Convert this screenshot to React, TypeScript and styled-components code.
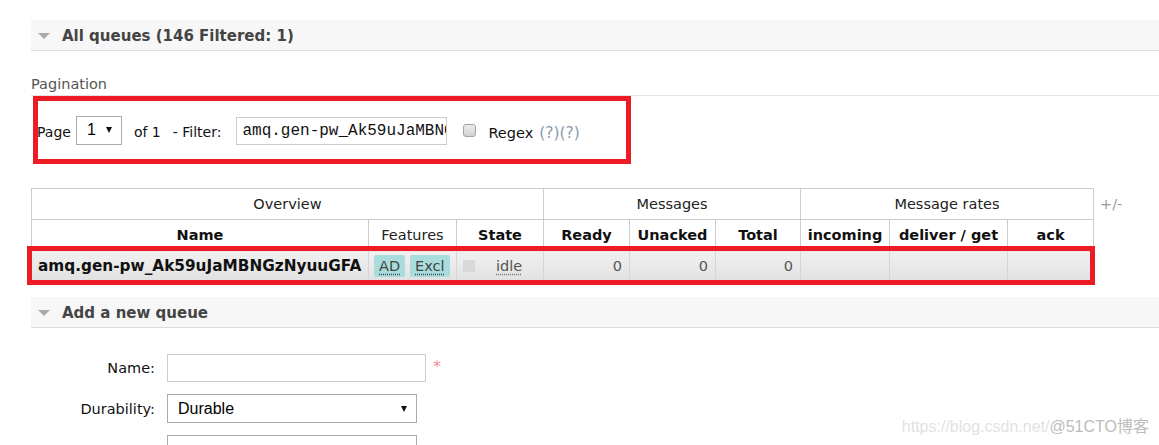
import React from 'react';
import styled, { createGlobalStyle } from 'styled-components';

const GlobalStyle = createGlobalStyle`
  html, body {
    margin: 0;
    padding: 0;
    background: #fff;
  }
  body {
    font-family: "DejaVu Sans", Verdana, sans-serif;
    color: #222;
  }
`;

const Page = styled.div`
  position: relative;
  width: 1159px;
  height: 445px;
  overflow: hidden;
  box-sizing: border-box;
  padding: 20px 0 0 31px;
`;

const SectionHeader = styled.div`
  display: flex;
  align-items: center;
  height: 28px;
  padding-top: 2px;
  background: #f7f7f7;
  border-bottom: 1px solid #ddd;
  font-size: 15px;
  font-weight: bold;
  color: #444;
`;

const Toggle = styled.span`
  width: 0;
  height: 0;
  margin: 0 12px 0 7px;
  border-left: 6.5px solid transparent;
  border-right: 6.5px solid transparent;
  border-top: 6px solid #aaa;
`;

const SubTitle = styled.div`
  margin-top: 23px;
  line-height: 20px;
  padding-bottom: 1px;
  border-bottom: 1px solid #e4e4e4;
  font-size: 14.5px;
  color: #555;
`;

// red annotation frames drawn over the screenshot
const Marked = styled.div`
  position: relative;
`;

const Frame = styled.span<{ $top: number; $left: number; $width: number; $height: number }>`
  position: absolute;
  top: ${(p) => p.$top}px;
  left: ${(p) => p.$left}px;
  width: ${(p) => p.$width}px;
  height: ${(p) => p.$height}px;
  box-sizing: border-box;
  border: 5px solid #ed1c24;
  pointer-events: none;
`;

const PaginationRow = styled.div`
  display: flex;
  align-items: center;
  height: 68px;
  padding-left: 6px;
  font-size: 14px;
  color: #111;
`;

const Text = styled.span<{ $left?: number }>`
  margin: 4px 0 0 ${(p) => p.$left || 0}px;
`;

const Select = styled.div<{ $width: number; $height: number }>`
  display: flex;
  align-items: center;
  justify-content: space-between;
  box-sizing: border-box;
  width: ${(p) => p.$width}px;
  height: ${(p) => p.$height}px;
  padding: 0 9px 0 10px;
  border: 1px solid #aaa;
  background: #fff;
  font-family: "Liberation Sans", Arial, sans-serif;
  font-size: 16px;
  color: #000;
`;

const PageSelect = styled(Select)`
  margin-left: 5px;
`;

const Caret = styled.span`
  margin-left: auto;
  width: 0;
  height: 0;
  border-left: 3.5px solid transparent;
  border-right: 3.5px solid transparent;
  border-top: 6px solid #111;
`;

const FilterInput = styled.input`
  box-sizing: border-box;
  width: 211px;
  height: 28px;
  margin: 1px 0 0 15px;
  padding: 0 0 0 5px;
  border: 1px solid #ccc;
  outline: none;
  font-family: "Liberation Mono", "Courier New", monospace;
  font-size: 16px;
  color: #111;
`;

const Checkbox = styled.span`
  box-sizing: border-box;
  width: 13px;
  height: 13px;
  margin: 0 12px 0 16px;
  border: 1px solid #a3a3a3;
  border-radius: 3px;
  background: linear-gradient(#ececec, #d2d2d2);
`;

const RegexLabel = styled.span`
  margin-top: 6px;
  font-size: 14.5px;
`;

const Help = styled.span`
  margin: 6px 0 0 6px;
  font-size: 15.5px;
  color: #8a9bb0;
`;

const TableArea = styled(Marked)`
  display: flex;
  align-items: flex-start;
  margin-top: 24px;
`;

const QueueTable = styled.table`
  border-collapse: collapse;
  table-layout: fixed;
  width: 1063px;
  font-size: 14.5px;
`;

const Th = styled.th<{ $light?: boolean }>`
  height: 30px;
  padding: 0 3px;
  border: 1px solid #ccc;
  text-align: center;
  font-weight: ${(p) => (p.$light ? 'normal' : 'bold')};
  color: ${(p) => (p.$light ? '#222' : '#111')};
  white-space: nowrap;
  overflow: hidden;
`;

const Td = styled.td<{ $align?: 'left' | 'right' | 'center' }>`
  height: 30px;
  padding: 0 7px 0 5px;
  border: 1px solid #d6d6d6;
  background: linear-gradient(#f1f1f1, #e1e1e1);
  text-align: ${(p) => p.$align || 'left'};
  color: #555;
  white-space: nowrap;
  overflow: hidden;
`;

const QueueName = styled.span`
  margin-left: 1px;
  font-size: 15.3px;
  font-weight: bold;
  color: #111;
`;

const Badge = styled.span`
  display: inline-block;
  margin-right: 5px;
  padding: 0 5px;
  line-height: 22px;
  border-radius: 2px;
  background: #a9dcdc;
  color: #444;
  text-decoration: underline dotted #444;
  text-underline-offset: 3px;
`;

const StateBox = styled.span`
  display: inline-block;
  width: 12px;
  height: 12px;
  margin: 0 21px 0 1px;
  vertical-align: -1px;
  background: #d9d9d9;
`;

const Idle = styled.span`
  text-decoration: underline dotted #777;
  text-underline-offset: 3px;
`;

const PlusMinus = styled.span`
  margin: 8px 0 0 6px;
  font-size: 14.5px;
  color: #999;
`;

const SecondSection = styled(SectionHeader)`
  margin-top: 15px;
`;

const Form = styled.div`
  display: grid;
  grid-template-columns: 124px auto;
  column-gap: 12px;
  row-gap: 12px;
  align-items: center;
  margin-top: 26px;
`;

const Label = styled.label`
  text-align: right;
  font-size: 14.5px;
  color: #111;
`;

const Field = styled.div`
  display: flex;
  align-items: flex-start;
`;

const TextInput = styled.input`
  box-sizing: border-box;
  width: 259px;
  height: 28px;
  border: 1px solid #ccc;
  outline: none;
`;

const Required = styled.span`
  margin: 3px 0 0 7px;
  font-size: 16px;
  color: #f58e94;
`;

const Watermark = styled.div`
  position: absolute;
  right: 10px;
  bottom: 9px;
  font-family: "Liberation Sans", Arial, "Noto Sans CJK SC", sans-serif;
  font-size: 16px;
  line-height: 18px;
  color: #e2e2e2;
  white-space: nowrap;
`;

const WatermarkBrand = styled.span`
  color: #bcbcbc;
`;

const columns = [337, 88, 87, 86, 86, 85, 89, 118, 86];

const App = () => {
  return (
    <Page>
      <GlobalStyle />
      <SectionHeader>
        <Toggle />
        All queues (146 Filtered: 1)
      </SectionHeader>

      <SubTitle>Pagination</SubTitle>
      <Marked>
        <PaginationRow>
          <Text>Page</Text>
          <PageSelect $width={46} $height={29}>
            1<Caret />
          </PageSelect>
          <Text $left={12}>of 1</Text>
          <Text $left={12}>- Filter:</Text>
          <FilterInput readOnly defaultValue="amq.gen-pw_Ak59uJaMBNGzNyuuGFA" />
          <Checkbox />
          <RegexLabel>Regex</RegexLabel>
          <Help>(?)(?)</Help>
        </PaginationRow>
        <Frame $top={0} $left={2} $width={598} $height={68} />
      </Marked>

      <TableArea>
        <QueueTable>
          <colgroup>
            {columns.map((w, i) => (
              <col key={i} style={{ width: w }} />
            ))}
          </colgroup>
          <thead>
            <tr>
              <Th $light colSpan={3}>Overview</Th>
              <Th $light colSpan={3}>Messages</Th>
              <Th $light colSpan={3}>Message rates</Th>
            </tr>
            <tr>
              <Th>Name</Th>
              <Th $light>Features</Th>
              <Th>State</Th>
              <Th>Ready</Th>
              <Th>Unacked</Th>
              <Th>Total</Th>
              <Th>incoming</Th>
              <Th>deliver / get</Th>
              <Th>ack</Th>
            </tr>
          </thead>
          <tbody>
            <tr>
              <Td>
                <QueueName>amq.gen-pw_Ak59uJaMBNGzNyuuGFA</QueueName>
              </Td>
              <Td>
                <Badge>AD</Badge>
                <Badge>Excl</Badge>
              </Td>
              <Td>
                <StateBox />
                <Idle>idle</Idle>
              </Td>
              <Td $align="right">0</Td>
              <Td $align="right">0</Td>
              <Td $align="right">0</Td>
              <Td />
              <Td />
              <Td />
            </tr>
          </tbody>
        </QueueTable>
        <PlusMinus>+/-</PlusMinus>
        <Frame $top={58} $left={-4} $width={1068} $height={39} />
      </TableArea>

      <SecondSection>
        <Toggle />
        Add a new queue
      </SecondSection>

      <Form>
        <Label>Name:</Label>
        <Field>
          <TextInput />
          <Required>*</Required>
        </Field>
        <Label>Durability:</Label>
        <Select $width={250} $height={29}>
          Durable
          <Caret />
        </Select>
        <Label />
        <Select $width={250} $height={29} />
      </Form>

      <Watermark>
        https://blog.csdn.net/<WatermarkBrand>@51CTO博客</WatermarkBrand>
      </Watermark>
    </Page>
  );
};

export default App;
